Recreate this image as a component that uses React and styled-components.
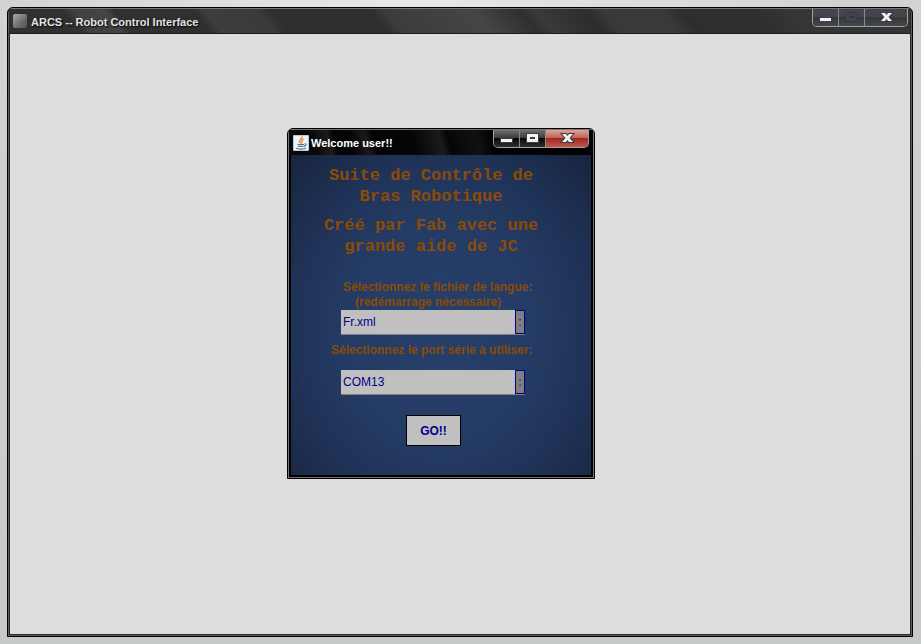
import React, { useId } from "react";
import styled, { createGlobalStyle, css } from "styled-components";

const GlobalStyle = createGlobalStyle`
  *, *::before, *::after { box-sizing: border-box; }
  html, body, #root { height: 100%; }
  body {
    margin: 0;
    font-family: "Liberation Sans", Arial, sans-serif;
    font-size: 12px;
  }
`;

const Desktop = styled.main`
  display: flex;
  height: 100%;
  padding: 7px 8px 7px 7px;
  background:
    radial-gradient(ellipse at 45% 0, #e8e8e8 0, rgba(216, 216, 216, 0) 60%),
    linear-gradient(#d2d2d2, #c6cac8);
`;

const Frame = styled.section`
  display: flex;
  flex-direction: column;
  border: 1px solid #000;
  border-radius: 6px 6px 0 0;
  overflow: hidden;
`;

const MainWindow = styled(Frame)`
  position: relative;
  flex: 1;
  padding: 0 2px 2px 1px;
  background: #2a2a2a;
  box-shadow: inset 0 0 0 1px #5c5c5c;
`;

const DialogWindow = styled(Frame)`
  position: absolute;
  top: 120px;
  left: 279px;
  width: 308px;
  padding: 0 1px 1px 1px;
  background: #77776f;
`;

const TitleBar = styled.header`
  display: flex;
  align-items: center;
  height: 26px;
  flex: none;
  padding-left: 4px;
  font-size: 11px;
  font-weight: bold;
  border-top: 1px solid #777;
  ${(p) =>
    p.$active
      ? css`
          padding-right: 4px;
          color: #fff;
          background: linear-gradient(75deg, #090909 0 28px, #1c1c1c 42px, #050505 48px 64px,
            #1a1a1a 78px, #050505 86px 124px, #1b1b1b 150px, #060606 158px, #111 186px, #020202 200px);
        `
      : css`
          padding-right: 2px;
          color: #e2e2e2;
          text-shadow: 1px 1px 2px #000;
          border-bottom: 1px solid #201a20;
          background: linear-gradient(51deg, #303030 0 56px, #414141 64px, #444 88px, #303030 96px 158px,
            #3d3d3d 166px, #3a3a3a 208px, #2f2f2f 216px 296px, #3c3c3c 306px, #454545 375px,
            #2f2f2f 412px, #3a3a3a 424px, #2e2e2e 456px 464px, #393939 476px 520px,
            #2e2e2e 536px, #303030 600px, #353535 616px);
        `}
`;

const TitleIcon = styled.svg`
  flex: none;
  width: ${(p) => p.$size}px;
  height: ${(p) => p.$size}px;
  margin-right: ${(p) => 18 - p.$size}px;
`;

const Title = styled.h1`
  flex: 1;
  margin: 0;
  padding-top: 1px;
  font-size: inherit;
  white-space: nowrap;
`;

const Controls = styled.div`
  display: flex;
  align-self: flex-start;
  height: 18px;
  border: 1px solid #a0a0a0;
  border-top: 0;
  border-radius: 0 0 5px 5px;
  overflow: hidden;
`;

const tones = {
  dim: "linear-gradient(#42464a 0 45%, #343739 50%, #45494c)",
  dark: "linear-gradient(#707070, #3d3d3d 45%, #080808 50%, #303030)",
  red: "linear-gradient(#e0a298, #c0665a 45%, #9d2a1e 50%, #c25a4a)",
};

const ControlButton = styled.button`
  display: grid;
  place-items: center;
  width: ${(p) => (p.$wide ? 42 : 26)}px;
  padding: 0;
  border: 0;
  border-right: ${(p) => (p.$wide ? 0 : 1)}px solid #8a8a8a;
  background: ${(p) => tones[p.$tone]};
  svg { display: block; }
`;

const glyphs = {
  minimize: <rect x="3" y="8" width="11" height="3" />,
  maximize: <path fillRule="evenodd" d="M3 3h11v8H3zM6 6v2h5V6z" />,
  close: <path d="M3 3h4l1.500 2L10 3h4l-3.500 4 3.500 4h-4L8.500 9 7 11H3l3.500-4z" />,
};

function Control({ kind, label, tone, faded }) {
  return (
    <ControlButton type="button" aria-label={label} $wide={kind === "close"} $tone={tone} disabled={faded}>
      <svg width="17" height="15" viewBox="0 0 17 15" fill={faded ? "#3f464b" : "#f2f2f2"}
        stroke={faded ? "#2c3136" : "#3a3e48"} strokeWidth={faded ? 1 : 2} paintOrder="stroke">
        {glyphs[kind]}
      </svg>
    </ControlButton>
  );
}

const MainBody = styled.div`
  flex: 1;
  margin-left: 1px;
  background: #ddd;
`;

const DialogBody = styled.form`
  display: flex;
  flex-direction: column;
  align-items: center;
  border: solid #000;
  border-width: 0 2px 2px;
  padding: 10px 20px 29px 0;
  color: #8a4b08;
  background: radial-gradient(ellipse 62% 68% at 50% 55%, #263f6a 0, #243c65 50%, #203358 78%, #17233c 118%);
`;

const Heading = styled.h2`
  width: 220px;
  margin: 0 0 8px;
  font: bold 17px/21px "Liberation Mono", "Courier New", monospace;
  text-align: center;
  white-space: nowrap;
`;

const FieldLabel = styled.label`
  width: ${(p) => (p.$wide ? 200 : 176)}px;
  margin: ${(p) => p.$gap};
  font-weight: bold;
  line-height: 15px;
  white-space: nowrap;
`;

const Indented = styled.span`
  display: block;
  padding-left: 12px;
`;

const Combo = styled.div`
  display: grid;
  grid-template-columns: 1fr 10px;
  width: 184px;
  height: 25px;
  margin-left: 4px;
  border-bottom: 1px solid #808080;
  background: #c0c0c0;
`;

const Select = styled.select`
  grid-area: 1 / 1 / 2 / 3;
  appearance: none;
  min-width: 0;
  padding: 0 12px 0 2px;
  border: 0;
  border-radius: 0;
  background: transparent;
  color: #00008b;
  font: 12px "Liberation Sans", Arial, sans-serif;
`;

const Arrow = styled.span`
  grid-area: 1 / 2;
  display: grid;
  place-items: center;
  border: 1px solid #00008b;
  background: #808080;
  color: #00008b;
  line-height: 14px;
  pointer-events: none;
`;

const GoButton = styled.button`
  width: 55px;
  height: 31px;
  margin: 20px 0 0 5px;
  padding: 0;
  border: 1px solid #000;
  background: #c0c0c0;
  color: #00008b;
  font: bold 12px "Liberation Sans", Arial, sans-serif;
`;

function ComboBox({ id, options }) {
  return (
    <Combo>
      <Select id={id} defaultValue={options[0]}>
        {options.map((o) => (
          <option key={o}>{o}</option>
        ))}
      </Select>
      <Arrow aria-hidden="true">:</Arrow>
    </Combo>
  );
}

function RobotIcon() {
  return (
    <TitleIcon $size={14} viewBox="0 0 14 14" aria-hidden="true">
      <defs>
        <linearGradient id="steel" x1="0" y1="0" x2="1" y2="1">
          <stop offset="0" stopColor="#aaa" />
          <stop offset="0.5" stopColor="#777" />
          <stop offset="1" stopColor="#4d4d4d" />
        </linearGradient>
      </defs>
      <rect width="14" height="14" rx="2" fill="url(#steel)" />
      <path d="M6 10l3-3 2 1 2-4M10 10l2-2" stroke="#595959" strokeWidth="0.700" fill="none" />
    </TitleIcon>
  );
}

function JavaIcon() {
  return (
    <TitleIcon $size={16} viewBox="0 0 16 16" aria-hidden="true">
      <rect width="16" height="16" rx="1" fill="#b4cbe0" />
      <rect x="1" y="1" width="14" height="14" fill="#f1f4f7" />
      <path d="M9 1.500C10 4 6 4.500 6.500 6.500c.2 1 1 1.300 1 2M10.500 4C8 5.500 9.500 6.500 8.500 8.500" stroke="#e8792b" strokeWidth="1.300" fill="none" />
      <path d="M4.500 9.500h6.500M5 11.300h5.500M11.500 9c2-.5 2 2-.5 2.300M3 13.300c2 1 8 1 10 0" stroke="#53758f" strokeWidth="1.200" fill="none" />
    </TitleIcon>
  );
}

function LoginDialog() {
  const languageId = useId();
  const portId = useId();
  return (
    <DialogWindow role="dialog" aria-label="Welcome user!!">
      <TitleBar $active>
        <JavaIcon />
        <Title as="h2">Welcome user!!</Title>
        <Controls>
          <Control kind="minimize" label="Minimize" tone="dark" />
          <Control kind="maximize" label="Maximize" tone="dark" />
          <Control kind="close" label="Close" tone="red" />
        </Controls>
      </TitleBar>
      <DialogBody onSubmit={(e) => e.preventDefault()}>
        <Heading>Suite de Contrôle de<br />Bras Robotique</Heading>
        <Heading>Créé par Fab avec une<br />grande aide de JC</Heading>
        <FieldLabel htmlFor={languageId} $gap="15px 0 0">
          Sélectionnez le fichier de langue:
          <Indented>(redémarrage nécessaire)</Indented>
        </FieldLabel>
        <ComboBox id={languageId} options={["Fr.xml"]} />
        <FieldLabel htmlFor={portId} $wide $gap="8px 0 12px">
          Sélectionnez le port série à utiliser:
        </FieldLabel>
        <ComboBox id={portId} options={["COM13"]} />
        <GoButton type="submit">GO!!</GoButton>
      </DialogBody>
    </DialogWindow>
  );
}

export default function App() {
  return (
    <>
      <GlobalStyle />
      <Desktop>
        <MainWindow>
          <TitleBar>
            <RobotIcon />
            <Title>ARCS -- Robot Control Interface</Title>
            <Controls>
              <Control kind="minimize" label="Minimize" tone="dim" />
              <Control kind="maximize" label="Maximize" tone="dim" faded />
              <Control kind="close" label="Close" tone="dim" />
            </Controls>
          </TitleBar>
          <MainBody />
          <LoginDialog />
        </MainWindow>
      </Desktop>
    </>
  );
}
